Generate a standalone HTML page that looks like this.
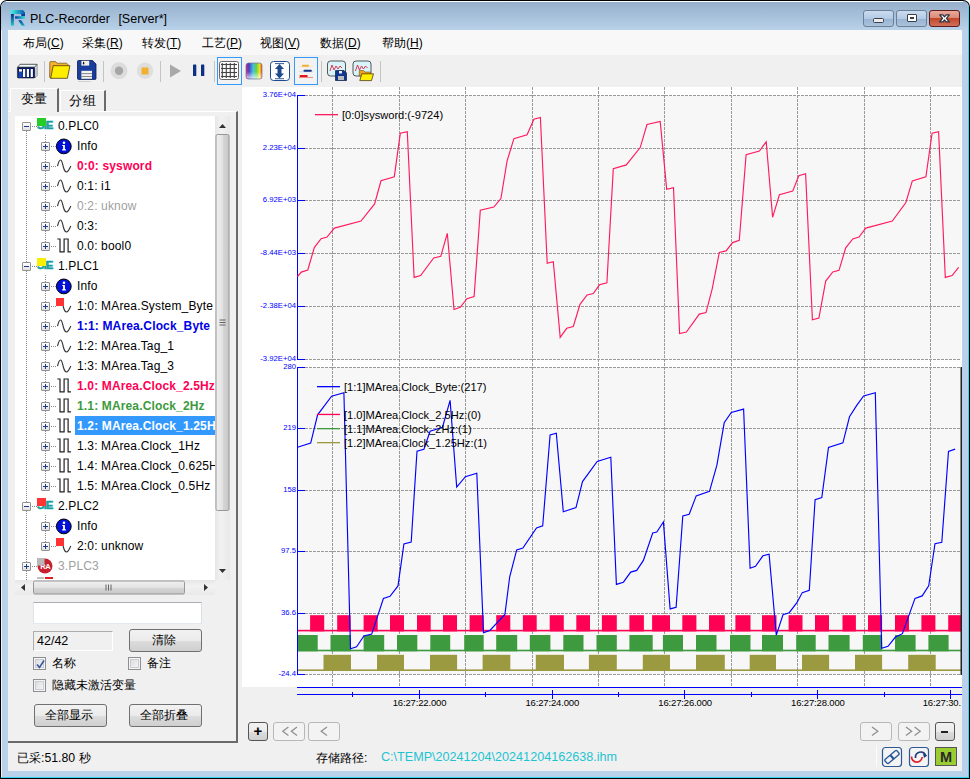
<!DOCTYPE html>
<html><head><meta charset="utf-8">
<style>
*{box-sizing:border-box}
html,body{margin:0;padding:0}
body{width:970px;height:779px;overflow:hidden;position:relative;background:#fff;font-family:"Liberation Sans",sans-serif;font-size:12px;color:#000}
.a{position:absolute}
.frame{left:1px;top:1px;width:968px;height:777px;background:#b9d1ea;border-radius:6px 6px 0 0}
.title{left:1px;top:1px;width:967px;height:29px;background:linear-gradient(#94adca,#b9d2ea);border-radius:6px 6px 0 0}
.client{left:8px;top:30px;width:954px;height:741px;background:#f0f0f0}
.menu{left:8px;top:30px;width:954px;height:25px;background:#f8f8f8}
.mi{top:35px;font-size:12px;white-space:nowrap}
.u{text-decoration:underline}
.sep{width:1px;height:21px;top:61px;background:#c8c8c8;border-right:1px solid #fff}
.wbtn{top:10px;height:17px;width:30px;border:1px solid #6d7f95;border-radius:3px;background:linear-gradient(#c9dbef 0%,#b4cbe5 50%,#98b3d3 51%,#a9c2dd 100%)}
.tree{left:15px;top:116px;width:200px;height:464px;background:#fff;overflow:hidden}
.row{position:absolute;height:20px;line-height:20px;white-space:nowrap;font-size:12px;letter-spacing:0.15px}
.exp{position:absolute;width:9px;height:9px;border:1px solid #919191;background:linear-gradient(#fff,#e0e0e0);border-radius:1px}
.exp:before{content:"";position:absolute;left:1px;top:3px;width:5px;height:1px;background:#1c3a8c}
.exp.p:after{content:"";position:absolute;left:3px;top:1px;width:1px;height:5px;background:#1c3a8c}
.dv{position:absolute;width:1px;border-left:1px dotted #909090}
.dh{position:absolute;height:1px;border-top:1px dotted #909090}
.btn{border:1px solid #707070;border-radius:3px;background:linear-gradient(#f2f2f2 0%,#ebebeb 50%,#dddddd 51%,#cfcfcf 100%);text-align:center;font-size:12px}
.chk{width:13px;height:13px;border:1px solid #8f8f8f;background:linear-gradient(135deg,#d8d8d8,#fafafa);box-shadow:inset 0 0 0 1px #f4f4f4, inset 0 0 0 2px #c8ccd4}
.nb{top:722px;height:19px;border:1px solid #b8b8b8;border-radius:3px;background:#f3f3f3;color:#888;font-size:12px;text-align:center;line-height:16px}
</style></head>
<body>
<div class="a" style="left:0;top:0;width:970px;height:779px;background:#000;border-radius:7px 7px 0 0"></div>
<div class="a frame"></div>
<div class="a" style="left:968px;top:6px;width:1px;height:772px;background:#35d6ef"></div>
<div class="a" style="left:1px;top:777px;width:968px;height:1px;background:#35d6ef"></div>
<div class="a" style="left:1px;top:6px;width:1px;height:771px;background:#e8f0f8"></div>
<div class="a title"></div>
<div class="a" style="left:6px;top:1px;width:957px;height:1px;background:#fbfdff"></div>
<!-- logo -->
<svg class="a" style="left:8px;top:6px" width="22" height="24">
<defs>
<linearGradient id="lgt" x1="0" x2="1"><stop offset="0" stop-color="#40f4e0"/><stop offset="1" stop-color="#0a52b0"/></linearGradient>
<linearGradient id="lgs" x1="0" y1="0" x2="0" y2="1"><stop offset="0" stop-color="#0a2f90"/><stop offset="1" stop-color="#22c8c0"/></linearGradient>
<linearGradient id="lgm" x1="0" x2="1"><stop offset="0" stop-color="#0a40a8"/><stop offset="1" stop-color="#30e4d0"/></linearGradient>
<linearGradient id="lgl" x1="0" y1="0" x2="0" y2="1"><stop offset="0" stop-color="#0a44a8"/><stop offset="1" stop-color="#18b4b8"/></linearGradient>
</defs>
<path d="M2.9 4 H14.9 L17 6.5 V8.5 H13.3 V8 H2.9 Z" fill="url(#lgt)"/>
<rect x="13.3" y="8" width="3.7" height="2.3" fill="#0c3c9c"/>
<rect x="7.1" y="10.2" width="9.9" height="2.6" fill="url(#lgm)"/>
<rect x="2.9" y="8" width="3" height="11.7" fill="url(#lgs)"/>
<path d="M10.2 14.2 H13.3 L17 19.7 H13.8 Z" fill="url(#lgl)"/>
</svg>
<div class="a" style="left:30px;top:11.5px;font-size:12.5px;white-space:nowrap;color:#000">PLC-Recorder<span style="display:inline-block;width:8.5px"></span>[Server*]</div>
<div class="a wbtn" style="left:863px;width:31px"><div class="a" style="left:9px;top:7px;width:11px;height:5px;border:1px solid #3a3f4a;background:#ececec;border-radius:1.5px"></div></div>
<div class="a wbtn" style="left:896px;width:31px"><div class="a" style="left:10px;top:3px;width:10px;height:8px;border:1px solid #3a3f4a;background:#fff;border-radius:1px"><div class="a" style="left:2px;top:2px;width:4px;height:2px;border:1px solid #3a3f4a;background:#8aa4c8"></div></div></div>
<div class="a wbtn" style="left:929px;width:31px;border-color:#5c1d1d;background:linear-gradient(#e9a99a 0%,#dd8b78 45%,#c2472b 50%,#d2705a 100%)">
<svg class="a" style="left:0;top:0" width="29" height="15"><path d="M9.7 3.9 H12.9 L14.5 5.8 L16.1 3.9 H19.3 L16.5 7.4 L19.3 10.9 H16.1 L14.5 9 L12.9 10.9 H9.7 L12.5 7.4 Z" fill="#fff" stroke="#2c3440" stroke-width="1.3" stroke-linejoin="round"/></svg></div>

<div class="a client"></div>
<div class="a menu"></div>
<div class="a mi" style="left:23px">布局(<span class="u">C</span>)</div>
<div class="a mi" style="left:82px">采集(<span class="u">R</span>)</div>
<div class="a mi" style="left:142px">转发(<span class="u">T</span>)</div>
<div class="a mi" style="left:202px">工艺(<span class="u">P</span>)</div>
<div class="a mi" style="left:260px">视图(<span class="u">V</span>)</div>
<div class="a mi" style="left:320px">数据(<span class="u">D</span>)</div>
<div class="a mi" style="left:382px">帮助(<span class="u">H</span>)</div>

<!-- toolbar -->
<svg class="a" style="left:0;top:52px" width="400" height="36">
 <!-- plc rack -->
 <path d="M17.5 15.3 L20 12.3 H37 L34.7 15.3 Z" fill="#eefcff" stroke="#333" stroke-width="0.8" stroke-linejoin="round"/>
 <path d="M34.7 15.3 L37 12.3 V23.5 L34.7 26 Z" fill="#f4fbfc" stroke="#555" stroke-width="0.7"/>
 <rect x="17.4" y="15.3" width="17.3" height="10.7" rx="0.8" fill="#08186a" stroke="#222" stroke-width="0.6"/>
 <rect x="18.5" y="20" width="4" height="5.5" fill="#1444b0"/>
 <rect x="19" y="17.2" width="3" height="2.4" fill="#f8f8f0"/>
 <rect x="23" y="17" width="2.2" height="8" fill="#f8fbf6"/><rect x="26.8" y="17" width="2.2" height="8" fill="#f8fbf6"/><rect x="30.7" y="17" width="2.2" height="8" fill="#f8fbf6"/>
 <rect x="44" y="9" width="1" height="21" fill="#c4c4c4"/>
 <!-- folder -->
 <path d="M49.8 10 Q49.8 9.6 50.5 9.6 H55.7 L56.9 11.2 H66.6 L68.3 12.9 V15 L51 26.2 Q49.6 26 49.6 25 Z" fill="#f8b030" stroke="#6b5010" stroke-width="0.7"/>
 <path d="M53.2 13.7 H69.9 L67.4 26.3 H50.7 Z" fill="#ffee00" stroke="#4a3a10" stroke-width="0.8" stroke-linejoin="round"/>
 <!-- save -->
 <path d="M78.5 8.5 H92.5 L96 12 V26.5 Q96 27.4 95 27.4 H78.5 Q77.5 27.4 77.5 26.5 V9.5 Q77.5 8.5 78.5 8.5 Z" fill="#1a3c9c" stroke="#0a1a50" stroke-width="0.8"/>
 <rect x="81.4" y="8.8" width="7.8" height="4.8" fill="#f4f0e8"/><ellipse cx="83.6" cy="11.2" rx="0.7" ry="1.4" fill="#111"/>
 <rect x="81.4" y="18.8" width="10.6" height="8" fill="#f2f2f2"/>
 <rect x="81.4" y="21.2" width="10.6" height="0.9" fill="#7a7a7a"/><rect x="81.4" y="24.0" width="10.6" height="0.9" fill="#7a7a7a"/>
 <rect x="78" y="29.2" width="12.8" height="0.8" fill="#c8c8c8"/>
 <rect x="103" y="9" width="1" height="21" fill="#c4c4c4"/>
 <!-- record / stop (disabled) -->
 <circle cx="119" cy="18.7" r="8.5" fill="#dcdcdc"/><circle cx="119" cy="18.7" r="4.2" fill="#a6a6a6"/>
 <circle cx="145" cy="18.7" r="8.2" fill="#dedede"/><rect x="141.5" y="15.5" width="7" height="7" fill="#f0b030"/>
 <rect x="160" y="9" width="1" height="21" fill="#c4c4c4"/>
 <path d="M170 12.5 L181 19 L170 25.5 Z" fill="#a9a9a9"/>
 <rect x="193" y="12.5" width="3.3" height="11.5" rx="0.6" fill="#0d3284"/><rect x="201" y="12.5" width="3.3" height="11.5" rx="0.6" fill="#0d3284"/>
 <rect x="214" y="9" width="1" height="21" fill="#c4c4c4"/>
 <!-- grid (selected) -->
 <rect x="217.5" y="5.5" width="24" height="27" fill="#f2f2f2" stroke="#3399ff" stroke-width="1"/>
 <rect x="219.5" y="9.5" width="19" height="18" rx="2" fill="#fff" stroke="#555" stroke-width="0.9"/>
 <g stroke="#444" stroke-width="1.1">
 <line x1="222.3" y1="11" x2="222.3" y2="26"/><line x1="226.3" y1="11" x2="226.3" y2="26"/><line x1="230.3" y1="11" x2="230.3" y2="26"/><line x1="234.3" y1="11" x2="234.3" y2="26"/>
 <line x1="221" y1="12.5" x2="237" y2="12.5"/><line x1="221" y1="16.5" x2="237" y2="16.5"/><line x1="221" y1="20.5" x2="237" y2="20.5"/><line x1="221" y1="24.5" x2="237" y2="24.5"/>
 </g>
 <!-- spectrum -->
 <defs><linearGradient id="sp" x1="0" x2="1"><stop offset="0" stop-color="#c02080"/><stop offset="0.2" stop-color="#4040c0"/><stop offset="0.45" stop-color="#40c0e0"/><stop offset="0.65" stop-color="#60d040"/><stop offset="0.85" stop-color="#f0e020"/><stop offset="1" stop-color="#f04010"/></linearGradient></defs>
 <rect x="246" y="11" width="16" height="16" rx="2.5" fill="url(#sp)" stroke="#7a6aa0" stroke-width="0.7"/>
 <defs><linearGradient id="spw" x1="0" y1="0" x2="0" y2="1"><stop offset="0" stop-color="#fff" stop-opacity="0"/><stop offset="0.55" stop-color="#fff" stop-opacity="0.05"/><stop offset="1" stop-color="#fff" stop-opacity="0.75"/></linearGradient></defs>
 <rect x="246.4" y="11.4" width="15.2" height="15.2" rx="2.3" fill="url(#spw)"/>
 <!-- vertical arrows -->
 <rect x="270.5" y="9.5" width="19" height="19" rx="3" fill="#fff" stroke="#1d4a8c" stroke-width="1"/>
 <path d="M279.5 12 L284 17 H281.5 V21.5 H284 L279.5 26.5 L275 21.5 H277.5 V17 H275 Z" fill="#1d4a8c"/>
 <rect x="275" y="11.2" width="9" height="0.9" fill="#1d4a8c"/><rect x="275" y="26.3" width="9" height="0.9" fill="#1d4a8c"/>
 <!-- bars (selected) -->
 <rect x="294.5" y="5.5" width="23" height="27" fill="#f2f2f2" stroke="#3399ff" stroke-width="1"/>
 <rect x="299" y="14.3" width="14" height="0.9" fill="#f9e6c0"/><rect x="302" y="12.8" width="7" height="2" rx="0.8" fill="#f0b030"/>
 <rect x="299" y="19.3" width="14" height="0.9" fill="#c8d4ea"/><rect x="303.5" y="17.7" width="8.3" height="2.1" rx="0.8" fill="#17388a"/>
 <rect x="299" y="25" width="14" height="0.8" fill="#f07070"/><rect x="299.7" y="23" width="7.9" height="2.1" rx="0.6" fill="#e01818"/>
 <rect x="321" y="9" width="1" height="21" fill="#c4c4c4"/>
 <!-- chart save -->
 <rect x="327.5" y="9" width="18" height="15" rx="3" fill="#d8f4fb" stroke="#444" stroke-width="0.9"/>
 <path d="M330 19 L332 13 L334 18 L336 14 L338 17 L340 14 L342 16" fill="none" stroke="#e02040" stroke-width="0.9"/>
 <path d="M335.5 18.5 H344 L346.5 21 V28.5 H335.5 Z" fill="#0f3590" stroke="#0b1a40" stroke-width="0.7"/>
 <rect x="338" y="24" width="6" height="4" fill="#bbb"/><rect x="339" y="19" width="3" height="2.5" fill="#eee"/>
 <!-- chart open -->
 <rect x="353" y="9" width="18" height="15" rx="3" fill="#d8f4fb" stroke="#444" stroke-width="0.9"/>
 <path d="M355.5 19 L357.5 13 L359.5 18 L361.5 14 L363.5 17 L365.5 14 L367.5 16" fill="none" stroke="#e02040" stroke-width="0.9"/>
 <path d="M359.3 18.5 H363.5 L365 20 H370.5 V24 H359.3 Z" fill="#f0a020" stroke="#6b5010" stroke-width="0.6"/>
 <path d="M359.8 28.6 L361.8 21.8 H373.5 L371.5 28.6 Z" fill="#ffee00" stroke="#4a3a10" stroke-width="0.8" stroke-linejoin="round"/>
 <rect x="380" y="9" width="1" height="21" fill="#c4c4c4"/>
</svg>

<!-- left tab panel -->
<div class="a" style="left:8px;top:111px;width:230px;height:632px;border-top:1px solid #fff;border-right:2px solid #6a6a6a;border-bottom:2px solid #6a6a6a;background:#f0f0f0"></div>
<div class="a" style="left:10px;top:88px;width:49px;height:24px;background:#f0f0f0;border-left:1px solid #fff;border-top:1px solid #fff;border-right:2px solid #6a6a6a;font-size:12.5px;text-align:center;line-height:21px;letter-spacing:0.5px">变量</div>
<div class="a" style="left:60px;top:90px;width:46px;height:21px;background:#f0f0f0;border-left:1px solid #fff;border-top:1px solid #fff;border-right:2px solid #6a6a6a;font-size:12.5px;text-align:center;line-height:21px;letter-spacing:0.5px">分组</div>

<!-- tree -->
<div class="a tree">
<svg class="a" style="left:0;top:0" width="200" height="464"><line x1="11.5" y1="15.0" x2="11.5" y2="464.0" stroke="#8a8a8a" stroke-width="1" stroke-dasharray="1,1"/><line x1="30.5" y1="19.0" x2="30.5" y2="126.0" stroke="#8a8a8a" stroke-width="1" stroke-dasharray="1,1"/><line x1="30.5" y1="159.0" x2="30.5" y2="366.0" stroke="#8a8a8a" stroke-width="1" stroke-dasharray="1,1"/><line x1="30.5" y1="399.0" x2="30.5" y2="426.0" stroke="#8a8a8a" stroke-width="1" stroke-dasharray="1,1"/><line x1="17.0" y1="10.5" x2="22.0" y2="10.5" stroke="#8a8a8a" stroke-width="1" stroke-dasharray="1,1"/><line x1="36.0" y1="30.5" x2="42.0" y2="30.5" stroke="#8a8a8a" stroke-width="1" stroke-dasharray="1,1"/><line x1="36.0" y1="50.5" x2="42.0" y2="50.5" stroke="#8a8a8a" stroke-width="1" stroke-dasharray="1,1"/><line x1="36.0" y1="70.5" x2="42.0" y2="70.5" stroke="#8a8a8a" stroke-width="1" stroke-dasharray="1,1"/><line x1="36.0" y1="90.5" x2="42.0" y2="90.5" stroke="#8a8a8a" stroke-width="1" stroke-dasharray="1,1"/><line x1="36.0" y1="110.5" x2="42.0" y2="110.5" stroke="#8a8a8a" stroke-width="1" stroke-dasharray="1,1"/><line x1="36.0" y1="130.5" x2="42.0" y2="130.5" stroke="#8a8a8a" stroke-width="1" stroke-dasharray="1,1"/><line x1="17.0" y1="150.5" x2="22.0" y2="150.5" stroke="#8a8a8a" stroke-width="1" stroke-dasharray="1,1"/><line x1="36.0" y1="170.5" x2="42.0" y2="170.5" stroke="#8a8a8a" stroke-width="1" stroke-dasharray="1,1"/><line x1="36.0" y1="190.5" x2="42.0" y2="190.5" stroke="#8a8a8a" stroke-width="1" stroke-dasharray="1,1"/><line x1="36.0" y1="210.5" x2="42.0" y2="210.5" stroke="#8a8a8a" stroke-width="1" stroke-dasharray="1,1"/><line x1="36.0" y1="230.5" x2="42.0" y2="230.5" stroke="#8a8a8a" stroke-width="1" stroke-dasharray="1,1"/><line x1="36.0" y1="250.5" x2="42.0" y2="250.5" stroke="#8a8a8a" stroke-width="1" stroke-dasharray="1,1"/><line x1="36.0" y1="270.5" x2="42.0" y2="270.5" stroke="#8a8a8a" stroke-width="1" stroke-dasharray="1,1"/><line x1="36.0" y1="290.5" x2="42.0" y2="290.5" stroke="#8a8a8a" stroke-width="1" stroke-dasharray="1,1"/><line x1="36.0" y1="310.5" x2="42.0" y2="310.5" stroke="#8a8a8a" stroke-width="1" stroke-dasharray="1,1"/><line x1="36.0" y1="330.5" x2="42.0" y2="330.5" stroke="#8a8a8a" stroke-width="1" stroke-dasharray="1,1"/><line x1="36.0" y1="350.5" x2="42.0" y2="350.5" stroke="#8a8a8a" stroke-width="1" stroke-dasharray="1,1"/><line x1="36.0" y1="370.5" x2="42.0" y2="370.5" stroke="#8a8a8a" stroke-width="1" stroke-dasharray="1,1"/><line x1="17.0" y1="390.5" x2="22.0" y2="390.5" stroke="#8a8a8a" stroke-width="1" stroke-dasharray="1,1"/><line x1="36.0" y1="410.5" x2="42.0" y2="410.5" stroke="#8a8a8a" stroke-width="1" stroke-dasharray="1,1"/><line x1="36.0" y1="430.5" x2="42.0" y2="430.5" stroke="#8a8a8a" stroke-width="1" stroke-dasharray="1,1"/><line x1="17.0" y1="450.5" x2="22.0" y2="450.5" stroke="#8a8a8a" stroke-width="1" stroke-dasharray="1,1"/></svg><div class="exp " style="left:7px;top:6px"></div>
<div class="a" style="left:22px;top:4px;font-size:11px;font-weight:bold;color:#1a9e9e;letter-spacing:-0.7px;line-height:11px;-webkit-text-stroke:0.5px #1a9e9e">SIE</div>
<div class="a" style="left:22px;top:2px;width:9px;height:8px;background:#27cd27"></div>
<div class="row" style="left:43px;top:0px;color:#000;">0.PLC0</div>
<div class="exp p" style="left:26px;top:26px"></div>
<svg class="a" style="left:41px;top:22px" width="17" height="17"><circle cx="7.8" cy="8.4" r="7.4" fill="#0010d8" stroke="#000" stroke-width="1"/><circle cx="8" cy="4.8" r="1.3" fill="#fff"/><path d="M6.2 6.9 H8.9 V11.3 H9.9 V12.5 H6.1 V11.3 H7.1 V8.1 H6.2 Z" fill="#fff"/></svg>
<div class="row" style="left:62px;top:20px;color:#000;">Info</div>
<div class="exp p" style="left:26px;top:46px"></div>
<svg class="a" style="left:42px;top:42px" width="16" height="16"><path d="M0.5 8 C1.5 4, 2.5 2, 3.5 2 C5 2, 5.5 6, 6.5 9.5 C7.5 13, 8.5 14, 9.5 14 C11 14, 12.5 11, 13.8 8" fill="none" stroke="#333" stroke-width="1.15"/></svg>
<div class="row" style="left:62px;top:40px;color:#ff0055;font-weight:bold;letter-spacing:0.15px;">0:0: sysword</div>
<div class="exp p" style="left:26px;top:66px"></div>
<svg class="a" style="left:42px;top:62px" width="16" height="16"><path d="M0.5 8 C1.5 4, 2.5 2, 3.5 2 C5 2, 5.5 6, 6.5 9.5 C7.5 13, 8.5 14, 9.5 14 C11 14, 12.5 11, 13.8 8" fill="none" stroke="#333" stroke-width="1.15"/></svg>
<div class="row" style="left:62px;top:60px;color:#000;">0:1: i1</div>
<div class="exp p" style="left:26px;top:86px"></div>
<svg class="a" style="left:42px;top:82px" width="16" height="16"><path d="M0.5 8 C1.5 4, 2.5 2, 3.5 2 C5 2, 5.5 6, 6.5 9.5 C7.5 13, 8.5 14, 9.5 14 C11 14, 12.5 11, 13.8 8" fill="none" stroke="#333" stroke-width="1.15"/></svg>
<div class="row" style="left:62px;top:80px;color:#a0a0a0;">0:2: uknow</div>
<div class="exp p" style="left:26px;top:106px"></div>
<svg class="a" style="left:42px;top:102px" width="16" height="16"><path d="M0.5 8 C1.5 4, 2.5 2, 3.5 2 C5 2, 5.5 6, 6.5 9.5 C7.5 13, 8.5 14, 9.5 14 C11 14, 12.5 11, 13.8 8" fill="none" stroke="#333" stroke-width="1.15"/></svg>
<div class="row" style="left:62px;top:100px;color:#000;">0:3:</div>
<div class="exp p" style="left:26px;top:126px"></div>
<svg class="a" style="left:42px;top:122px" width="16" height="16"><path d="M0.3 1 H3 V13.8 H7.1 V1 H11.1 V13.8 H14" fill="none" stroke="#222" stroke-width="1.2"/></svg>
<div class="row" style="left:62px;top:120px;color:#000;">0.0: bool0</div>
<div class="exp " style="left:7px;top:146px"></div>
<div class="a" style="left:22px;top:144px;font-size:11px;font-weight:bold;color:#1a9e9e;letter-spacing:-0.7px;line-height:11px;-webkit-text-stroke:0.5px #1a9e9e">SIE</div>
<div class="a" style="left:22px;top:142px;width:9px;height:8px;background:#f8f000"></div>
<div class="row" style="left:43px;top:140px;color:#000;">1.PLC1</div>
<div class="exp p" style="left:26px;top:166px"></div>
<svg class="a" style="left:41px;top:162px" width="17" height="17"><circle cx="7.8" cy="8.4" r="7.4" fill="#0010d8" stroke="#000" stroke-width="1"/><circle cx="8" cy="4.8" r="1.3" fill="#fff"/><path d="M6.2 6.9 H8.9 V11.3 H9.9 V12.5 H6.1 V11.3 H7.1 V8.1 H6.2 Z" fill="#fff"/></svg>
<div class="row" style="left:62px;top:160px;color:#000;">Info</div>
<div class="exp p" style="left:26px;top:186px"></div>
<svg class="a" style="left:42px;top:182px" width="16" height="16"><path d="M0.5 8 C1.5 4, 2.5 2, 3.5 2 C5 2, 5.5 6, 6.5 9.5 C7.5 13, 8.5 14, 9.5 14 C11 14, 12.5 11, 13.8 8" fill="none" stroke="#333" stroke-width="1.15"/></svg>
<div class="a" style="left:41px;top:182px;width:8px;height:8px;background:#ff3333"></div>
<div class="row" style="left:62px;top:180px;color:#000;">1:0: MArea.System_Byte</div>
<div class="exp p" style="left:26px;top:206px"></div>
<svg class="a" style="left:42px;top:202px" width="16" height="16"><path d="M0.5 8 C1.5 4, 2.5 2, 3.5 2 C5 2, 5.5 6, 6.5 9.5 C7.5 13, 8.5 14, 9.5 14 C11 14, 12.5 11, 13.8 8" fill="none" stroke="#333" stroke-width="1.15"/></svg>
<div class="row" style="left:62px;top:200px;color:#0000e6;font-weight:bold;letter-spacing:0.15px;">1:1: MArea.Clock_Byte</div>
<div class="exp p" style="left:26px;top:226px"></div>
<svg class="a" style="left:42px;top:222px" width="16" height="16"><path d="M0.5 8 C1.5 4, 2.5 2, 3.5 2 C5 2, 5.5 6, 6.5 9.5 C7.5 13, 8.5 14, 9.5 14 C11 14, 12.5 11, 13.8 8" fill="none" stroke="#333" stroke-width="1.15"/></svg>
<div class="row" style="left:62px;top:220px;color:#000;">1:2: MArea.Tag_1</div>
<div class="exp p" style="left:26px;top:246px"></div>
<svg class="a" style="left:42px;top:242px" width="16" height="16"><path d="M0.5 8 C1.5 4, 2.5 2, 3.5 2 C5 2, 5.5 6, 6.5 9.5 C7.5 13, 8.5 14, 9.5 14 C11 14, 12.5 11, 13.8 8" fill="none" stroke="#333" stroke-width="1.15"/></svg>
<div class="row" style="left:62px;top:240px;color:#000;">1:3: MArea.Tag_3</div>
<div class="exp p" style="left:26px;top:266px"></div>
<svg class="a" style="left:42px;top:262px" width="16" height="16"><path d="M0.3 1 H3 V13.8 H7.1 V1 H11.1 V13.8 H14" fill="none" stroke="#222" stroke-width="1.2"/></svg>
<div class="row" style="left:62px;top:260px;color:#ff0055;font-weight:bold;letter-spacing:0.15px;">1.0: MArea.Clock_2.5Hz</div>
<div class="exp p" style="left:26px;top:286px"></div>
<svg class="a" style="left:42px;top:282px" width="16" height="16"><path d="M0.3 1 H3 V13.8 H7.1 V1 H11.1 V13.8 H14" fill="none" stroke="#222" stroke-width="1.2"/></svg>
<div class="row" style="left:62px;top:280px;color:#3c9a3c;font-weight:bold;letter-spacing:0.15px;">1.1: MArea.Clock_2Hz</div>
<div class="exp p" style="left:26px;top:306px"></div>
<svg class="a" style="left:42px;top:302px" width="16" height="16"><path d="M0.3 1 H3 V13.8 H7.1 V1 H11.1 V13.8 H14" fill="none" stroke="#222" stroke-width="1.2"/></svg>
<div class="a" style="left:60px;top:300px;width:140px;height:19px;background:#3399ff"></div>
<div class="row" style="left:62px;top:300px;color:#fff;font-weight:bold;letter-spacing:0.15px;">1.2: MArea.Clock_1.25Hz</div>
<div class="exp p" style="left:26px;top:326px"></div>
<svg class="a" style="left:42px;top:322px" width="16" height="16"><path d="M0.3 1 H3 V13.8 H7.1 V1 H11.1 V13.8 H14" fill="none" stroke="#222" stroke-width="1.2"/></svg>
<div class="row" style="left:62px;top:320px;color:#000;">1.3: MArea.Clock_1Hz</div>
<div class="exp p" style="left:26px;top:346px"></div>
<svg class="a" style="left:42px;top:342px" width="16" height="16"><path d="M0.3 1 H3 V13.8 H7.1 V1 H11.1 V13.8 H14" fill="none" stroke="#222" stroke-width="1.2"/></svg>
<div class="row" style="left:62px;top:340px;color:#000;">1.4: MArea.Clock_0.625Hz</div>
<div class="exp p" style="left:26px;top:366px"></div>
<svg class="a" style="left:42px;top:362px" width="16" height="16"><path d="M0.3 1 H3 V13.8 H7.1 V1 H11.1 V13.8 H14" fill="none" stroke="#222" stroke-width="1.2"/></svg>
<div class="row" style="left:62px;top:360px;color:#000;">1.5: MArea.Clock_0.5Hz</div>
<div class="exp " style="left:7px;top:386px"></div>
<div class="a" style="left:22px;top:384px;font-size:11px;font-weight:bold;color:#1a9e9e;letter-spacing:-0.7px;line-height:11px;-webkit-text-stroke:0.5px #1a9e9e">SIE</div>
<div class="a" style="left:22px;top:382px;width:9px;height:8px;background:#ff3333"></div>
<div class="row" style="left:43px;top:380px;color:#000;">2.PLC2</div>
<div class="exp p" style="left:26px;top:406px"></div>
<svg class="a" style="left:41px;top:402px" width="17" height="17"><circle cx="7.8" cy="8.4" r="7.4" fill="#0010d8" stroke="#000" stroke-width="1"/><circle cx="8" cy="4.8" r="1.3" fill="#fff"/><path d="M6.2 6.9 H8.9 V11.3 H9.9 V12.5 H6.1 V11.3 H7.1 V8.1 H6.2 Z" fill="#fff"/></svg>
<div class="row" style="left:62px;top:400px;color:#000;">Info</div>
<div class="exp p" style="left:26px;top:426px"></div>
<svg class="a" style="left:42px;top:422px" width="16" height="16"><path d="M0.5 8 C1.5 4, 2.5 2, 3.5 2 C5 2, 5.5 6, 6.5 9.5 C7.5 13, 8.5 14, 9.5 14 C11 14, 12.5 11, 13.8 8" fill="none" stroke="#333" stroke-width="1.15"/></svg>
<div class="a" style="left:41px;top:422px;width:8px;height:8px;background:#ff3333"></div>
<div class="row" style="left:62px;top:420px;color:#000;">2:0: unknow</div>
<div class="exp p" style="left:7px;top:446px"></div>
<svg class="a" style="left:22px;top:441px" width="18" height="18"><circle cx="8" cy="9" r="7.5" fill="#c8202e"/><text x="8.3" y="12" text-anchor="middle" font-family="Liberation Sans, sans-serif" font-size="7.5" font-weight="bold" fill="#fff" letter-spacing="-0.3">RA</text><rect x="0" y="1" width="7.5" height="7.5" fill="#b8b8b8"/></svg>
<div class="row" style="left:43px;top:440px;color:#a0a0a0;">3.PLC3</div>
<div class="a" style="left:22px;top:461px;width:7px;height:2px;background:#c0c0c0"></div>
<div class="a" style="left:30px;top:461px;width:8px;height:2px;background:#e02020"></div>
</div>
<!-- vertical scrollbar -->
<div class="a" style="left:215px;top:116px;width:15px;height:464px;background:linear-gradient(90deg,#e6e6e6,#f2f2f2 40%,#e9e9e9)"></div>
<svg class="a" style="left:215px;top:116px" width="15" height="464">
 <path d="M4 12 L7.5 8 L11 12 Z" fill="#333"/>
 <rect x="1" y="18.5" width="13" height="376" rx="1.5" fill="url(#tg)" stroke="#8e8f8f" stroke-width="0.9"/>
 <defs><linearGradient id="tg" x1="0" x2="1"><stop offset="0" stop-color="#f0f0f0"/><stop offset="0.5" stop-color="#e3e3e3"/><stop offset="0.51" stop-color="#d6d6d6"/><stop offset="1" stop-color="#c8c8c8"/></linearGradient></defs>
 <g stroke="#555" stroke-width="0.9"><line x1="4.5" y1="204" x2="10.5" y2="204"/><line x1="4.5" y1="206.5" x2="10.5" y2="206.5"/><line x1="4.5" y1="209" x2="10.5" y2="209"/></g>
 <path d="M4 453 L7.5 457 L11 453 Z" fill="#333"/>
</svg>
<!-- horizontal scrollbar -->
<div class="a" style="left:15px;top:580px;width:200px;height:15px;background:linear-gradient(#e6e6e6,#f2f2f2 40%,#e9e9e9)"></div>
<div class="a" style="left:215px;top:580px;width:15px;height:15px;background:#f0f0f0"></div>
<svg class="a" style="left:15px;top:580px" width="200" height="15">
 <defs><linearGradient id="hg" x1="0" y1="0" x2="0" y2="1"><stop offset="0" stop-color="#f0f0f0"/><stop offset="0.5" stop-color="#e3e3e3"/><stop offset="0.51" stop-color="#d6d6d6"/><stop offset="1" stop-color="#c8c8c8"/></linearGradient></defs>
 <path d="M10 7.5 L6 4 L6 11 Z" transform="translate(16,0) scale(-1,1) translate(0,0)" fill="#333"/>
 <rect x="18.5" y="1" width="151" height="13" rx="1.5" fill="url(#hg)" stroke="#8e8f8f" stroke-width="0.9"/>
 <g stroke="#555" stroke-width="0.9"><line x1="91" y1="4.5" x2="91" y2="10.5"/><line x1="93.5" y1="4.5" x2="93.5" y2="10.5"/><line x1="96" y1="4.5" x2="96" y2="10.5"/></g>
 <path d="M189 4 L193 7.5 L189 11 Z" fill="#333"/>
</svg>

<!-- search + controls -->
<div class="a" style="left:33px;top:602px;width:169px;height:22px;background:#fff;border:1px solid #abadb3;border-top-color:#abadb3;border-bottom-color:#e3e9ef;border-left-color:#e2e3ea;border-right-color:#dbdfe6"></div>
<div class="a" style="left:33px;top:631px;width:80px;height:20px;background:#f0f0f0;border:1px solid #adadad;border-right-color:#fff;border-bottom-color:#fff;font-size:12.5px;line-height:18px;padding-left:3px">42/42</div>
<div class="a btn" style="left:129px;top:629px;width:73px;height:23px;line-height:21px;padding-right:3px">清除</div>
<div class="a chk" style="left:33px;top:657px"><svg class="a" style="left:1px;top:1px" width="11" height="11"><path d="M2 5.5 L4.5 8.5 L9 1.5" fill="none" stroke="#3b57a0" stroke-width="1.6"/></svg></div>
<div class="a" style="left:52px;top:655px;font-size:12px">名称</div>
<div class="a chk" style="left:128px;top:657px"></div>
<div class="a" style="left:147px;top:655px;font-size:12px">备注</div>
<div class="a chk" style="left:33px;top:679px"></div>
<div class="a" style="left:52px;top:677px;font-size:12px">隐藏未激活变量</div>
<div class="a btn" style="left:34px;top:704px;width:73px;height:23px;line-height:21px;padding-right:3px">全部显示</div>
<div class="a btn" style="left:129px;top:704px;width:73px;height:23px;line-height:21px;padding-right:3px">全部折叠</div>

<svg width="970" height="779" style="position:absolute;left:0;top:0">
<rect x="242" y="87" width="720" height="600" fill="#ffffff"/>
<rect x="298" y="96" width="663" height="263" fill="#f7f7f7"/>
<rect x="298" y="368" width="663" height="306" fill="#f7f7f7"/>
<g stroke="#9a9a9a" stroke-width="1" stroke-dasharray="3,1" fill="none"><line x1="332.5" y1="87" x2="332.5" y2="687" /><line x1="399.5" y1="87" x2="399.5" y2="687" /><line x1="465.5" y1="87" x2="465.5" y2="687" /><line x1="532.5" y1="87" x2="532.5" y2="687" /><line x1="598.5" y1="87" x2="598.5" y2="687" /><line x1="664.5" y1="87" x2="664.5" y2="687" /><line x1="731.5" y1="87" x2="731.5" y2="687" /><line x1="797.5" y1="87" x2="797.5" y2="687" /><line x1="864.5" y1="87" x2="864.5" y2="687" /><line x1="930.5" y1="87" x2="930.5" y2="687" /><line x1="305" y1="95.5" x2="961" y2="95.5" /><line x1="305" y1="148.5" x2="961" y2="148.5" /><line x1="305" y1="200.5" x2="961" y2="200.5" /><line x1="305" y1="253.5" x2="961" y2="253.5" /><line x1="305" y1="306.5" x2="961" y2="306.5" /><line x1="305" y1="359.5" x2="961" y2="359.5" /><line x1="305" y1="367.5" x2="961" y2="367.5" /><line x1="305" y1="428.5" x2="961" y2="428.5" /><line x1="305" y1="490.5" x2="961" y2="490.5" /><line x1="305" y1="551.5" x2="961" y2="551.5" /><line x1="305" y1="613.5" x2="961" y2="613.5" /><line x1="305" y1="674.5" x2="961" y2="674.5" /></g>
<rect x="297" y="95" width="1" height="265" fill="#0000ff"/><rect x="297" y="367" width="1" height="308" fill="#0000ff"/><rect x="297" y="95" width="8" height="1" fill="#0000ff"/><rect x="297" y="148" width="8" height="1" fill="#0000ff"/><rect x="297" y="200" width="8" height="1" fill="#0000ff"/><rect x="297" y="253" width="8" height="1" fill="#0000ff"/><rect x="297" y="306" width="8" height="1" fill="#0000ff"/><rect x="297" y="359" width="8" height="1" fill="#0000ff"/><rect x="297" y="367" width="8" height="1" fill="#0000ff"/><rect x="297" y="428" width="8" height="1" fill="#0000ff"/><rect x="297" y="490" width="8" height="1" fill="#0000ff"/><rect x="297" y="551" width="8" height="1" fill="#0000ff"/><rect x="297" y="613" width="8" height="1" fill="#0000ff"/><rect x="297" y="674" width="8" height="1" fill="#0000ff"/>
<g font-family='"Liberation Sans", sans-serif' font-size="7.7" fill="#0000ff" text-anchor="end"><text x="296" y="97.2">3.76E+04</text><text x="296" y="150.2">2.23E+04</text><text x="296" y="202.2">6.92E+03</text><text x="296" y="255.2">-8.44E+03</text><text x="296" y="308.2">-2.38E+04</text><text x="296" y="361.2">-3.92E+04</text><text x="296" y="369.2">280</text><text x="296" y="430.2">219</text><text x="296" y="492.2">158</text><text x="296" y="553.2">97.5</text><text x="296" y="615.2">36.6</text><text x="296" y="676.2">-24.4</text></g>
<rect x="310.1" y="615.2" width="14.1" height="16.2" fill="#ff0055"/><rect x="337.2" y="615.2" width="13.4" height="16.2" fill="#ff0055"/><rect x="363.6" y="615.2" width="14.1" height="16.2" fill="#ff0055"/><rect x="390.0" y="615.2" width="14.0" height="16.2" fill="#ff0055"/><rect x="417.0" y="615.2" width="13.7" height="16.2" fill="#ff0055"/><rect x="443.0" y="615.2" width="14.0" height="16.2" fill="#ff0055"/><rect x="469.6" y="615.2" width="14.1" height="16.2" fill="#ff0055"/><rect x="496.2" y="615.2" width="14.1" height="16.2" fill="#ff0055"/><rect x="522.9" y="615.2" width="13.8" height="16.2" fill="#ff0055"/><rect x="549.7" y="615.2" width="14.1" height="16.2" fill="#ff0055"/><rect x="576.3" y="615.2" width="13.7" height="16.2" fill="#ff0055"/><rect x="601.9" y="615.2" width="14.9" height="16.2" fill="#ff0055"/><rect x="629.4" y="615.2" width="14.5" height="16.2" fill="#ff0055"/><rect x="652.1" y="615.2" width="17.9" height="16.2" fill="#ff0055"/><rect x="682.3" y="615.2" width="14.1" height="16.2" fill="#ff0055"/><rect x="709.0" y="615.2" width="15.8" height="16.2" fill="#ff0055"/><rect x="735.4" y="615.2" width="15.1" height="16.2" fill="#ff0055"/><rect x="762.0" y="615.2" width="14.5" height="16.2" fill="#ff0055"/><rect x="788.6" y="615.2" width="13.9" height="16.2" fill="#ff0055"/><rect x="815.0" y="615.2" width="14.0" height="16.2" fill="#ff0055"/><rect x="842.5" y="615.2" width="13.4" height="16.2" fill="#ff0055"/><rect x="868.0" y="615.2" width="14.1" height="16.2" fill="#ff0055"/><rect x="895.0" y="615.2" width="14.0" height="16.2" fill="#ff0055"/><rect x="921.4" y="615.2" width="14.0" height="16.2" fill="#ff0055"/><rect x="948.2" y="615.2" width="12.8" height="16.2" fill="#ff0055"/><rect x="298" y="629.8" width="663" height="1.6" fill="#ff0055"/>
<rect x="298.0" y="635.0" width="19.7" height="16.3" fill="#3e9a3e"/><rect x="330.5" y="635.0" width="20.5" height="16.3" fill="#3e9a3e"/><rect x="363.6" y="635.0" width="20.6" height="16.3" fill="#3e9a3e"/><rect x="397.0" y="635.0" width="20.3" height="16.3" fill="#3e9a3e"/><rect x="430.3" y="635.0" width="19.9" height="16.3" fill="#3e9a3e"/><rect x="464.2" y="635.0" width="19.5" height="16.3" fill="#3e9a3e"/><rect x="496.2" y="635.0" width="21.0" height="16.3" fill="#3e9a3e"/><rect x="529.8" y="635.0" width="20.6" height="16.3" fill="#3e9a3e"/><rect x="563.3" y="635.0" width="20.2" height="16.3" fill="#3e9a3e"/><rect x="596.5" y="635.0" width="20.3" height="16.3" fill="#3e9a3e"/><rect x="629.4" y="635.0" width="23.3" height="16.3" fill="#3e9a3e"/><rect x="662.9" y="635.0" width="20.1" height="16.3" fill="#3e9a3e"/><rect x="696.0" y="635.0" width="20.5" height="16.3" fill="#3e9a3e"/><rect x="730.0" y="635.0" width="20.5" height="16.3" fill="#3e9a3e"/><rect x="762.0" y="635.0" width="21.0" height="16.3" fill="#3e9a3e"/><rect x="796.2" y="635.0" width="19.5" height="16.3" fill="#3e9a3e"/><rect x="828.5" y="635.0" width="21.1" height="16.3" fill="#3e9a3e"/><rect x="862.8" y="635.0" width="19.3" height="16.3" fill="#3e9a3e"/><rect x="895.0" y="635.0" width="20.6" height="16.3" fill="#3e9a3e"/><rect x="928.4" y="635.0" width="20.2" height="16.3" fill="#3e9a3e"/><rect x="298" y="649.7" width="663" height="1.6" fill="#3e9a3e"/>
<rect x="323.5" y="654.8" width="27.5" height="16.2" fill="#9c9a40"/><rect x="377.0" y="654.8" width="27.0" height="16.2" fill="#9c9a40"/><rect x="430.0" y="654.8" width="27.1" height="16.2" fill="#9c9a40"/><rect x="482.6" y="654.8" width="27.7" height="16.2" fill="#9c9a40"/><rect x="535.8" y="654.8" width="28.2" height="16.2" fill="#9c9a40"/><rect x="588.9" y="654.8" width="27.9" height="16.2" fill="#9c9a40"/><rect x="642.8" y="654.8" width="27.2" height="16.2" fill="#9c9a40"/><rect x="696.0" y="654.8" width="28.8" height="16.2" fill="#9c9a40"/><rect x="749.7" y="654.8" width="26.3" height="16.2" fill="#9c9a40"/><rect x="802.0" y="654.8" width="27.1" height="16.2" fill="#9c9a40"/><rect x="855.0" y="654.8" width="27.1" height="16.2" fill="#9c9a40"/><rect x="908.2" y="654.8" width="27.5" height="16.2" fill="#9c9a40"/><rect x="298" y="669.4" width="663" height="1.6" fill="#9c9a40"/>
<rect x="960.5" y="367" width="1.5" height="308" fill="#222"/>
<polyline points="297.5,276.5 301.3,272.1 307.8,270.0 314.3,247.6 321.1,238.7 327.0,237.0 334.4,228.1 361.0,221.0 374.6,203.9 381.0,180.8 394.3,176.7 400.3,133.3 407.3,131.8 414.1,277.4 420.6,275.6 433.7,258.0 440.8,256.2 447.3,233.3 454.0,309.5 460.2,307.3 467.0,298.7 474.1,296.6 480.3,210.2 493.8,207.1 500.9,198.5 507.1,160.9 513.9,138.7 527.1,134.7 533.9,119.3 540.4,117.4 547.2,263.3 553.3,261.7 560.2,337.3 566.7,328.3 573.3,326.5 580.0,304.3 587.1,295.0 593.3,293.5 599.5,284.8 606.9,282.7 613.3,168.6 626.3,164.9 640.2,147.6 647.0,124.5 660.2,121.4 666.7,189.2 673.5,187.7 679.6,333.6 686.4,332.0 699.3,314.1 706.0,312.6 712.2,288.8 719.3,252.5 726.1,250.9 732.6,242.6 739.3,240.4 746.1,154.7 759.4,151.0 766.2,141.8 772.6,217.3 779.4,194.8 792.7,191.1 798.8,175.7 805.6,173.8 812.4,319.7 818.9,318.1 825.7,281.1 832.8,271.9 839.0,270.3 845.7,247.8 852.8,238.9 859.0,237.0 865.8,228.1 892.3,221.0 905.9,202.5 912.3,180.9 925.9,176.9 932.1,133.1 938.6,131.6 945.3,277.4 952.1,275.6 958.6,267.3" fill="none" stroke="#ff1a5e" stroke-width="1.15" stroke-linejoin="miter"/>
<polyline points="297.5,447.3 310.7,443.1 317.6,414.8 331.6,396.2 343.9,392.8 350.5,648.8 356.6,646.8 363.9,635.9 371.7,634.1 383.4,598.5 390.0,596.3 398.0,585.9 403.9,543.9 411.2,542.0 417.0,451.2 423.9,449.2 430.1,431.2 442.5,427.2 450.1,400.4 456.7,487.1 465.4,476.7 476.8,473.3 483.5,632.6 489.9,630.5 504.9,614.4 509.7,576.8 516.7,549.9 522.9,548.0 536.5,527.9 542.7,525.9 550.1,435.0 556.3,433.3 563.3,511.8 576.0,507.6 582.5,481.6 597.2,461.5 610.8,457.3 616.4,584.4 623.4,582.2 630.7,572.1 636.7,570.4 643.4,560.4 652.7,533.0 656.8,532.0 663.4,522.0 670.1,608.9 676.1,607.2 682.8,516.0 689.2,514.3 696.2,495.9 709.5,491.3 716.9,465.2 724.2,422.8 731.3,412.4 743.6,409.1 750.1,568.3 755.5,566.3 762.9,555.8 769.1,554.2 776.3,635.1 783.0,614.7 789.2,612.7 796.9,602.6 802.3,592.6 809.3,590.3 815.1,499.6 821.8,497.6 828.5,447.5 842.9,442.8 849.5,416.8 856.9,405.1 863.6,396.0 875.3,392.7 881.7,648.2 888.0,646.3 895.2,637.3 902.4,633.7 915.0,598.4 922.2,595.9 928.7,585.8 935.0,543.7 941.8,542.3 948.5,451.5 955.1,449.1" fill="none" stroke="#0000ff" stroke-width="1.15" stroke-linejoin="miter"/>
<rect x="315" y="114" width="23" height="1.3" fill="#ff1a5e"/><rect x="317" y="386" width="23" height="1.3" fill="#0000ff"/><rect x="317" y="413.8" width="23" height="1.3" fill="#ff0055"/><rect x="317" y="428" width="23" height="1.3" fill="#3e9a3e"/><rect x="317" y="442" width="23" height="1.3" fill="#9c9a40"/><g font-family='"Liberation Sans", sans-serif' font-size="11.1" fill="#000"><text x="342" y="118.6">[0:0]sysword:(-9724)</text><text x="344" y="390.6">[1:1]MArea.Clock_Byte:(217)</text><text x="344" y="418.6">[1.0]MArea.Clock_2.5Hz:(0)</text><text x="344" y="432.6">[1.1]MArea.Clock_2Hz:(1)</text><text x="344" y="446.6">[1.2]MArea.Clock_1.25Hz:(1)</text></g>
<rect x="297" y="687" width="665" height="1" fill="#0000ff"/><rect x="297" y="694" width="665" height="1" fill="#0000ff"/><rect x="352" y="692" width="1" height="5" fill="#0000ff"/><rect x="419" y="690" width="1" height="9" fill="#0000ff"/><rect x="485" y="692" width="1" height="5" fill="#0000ff"/><rect x="552" y="690" width="1" height="9" fill="#0000ff"/><rect x="618" y="692" width="1" height="5" fill="#0000ff"/><rect x="684" y="690" width="1" height="9" fill="#0000ff"/><rect x="751" y="692" width="1" height="5" fill="#0000ff"/><rect x="817" y="690" width="1" height="9" fill="#0000ff"/><rect x="884" y="692" width="1" height="5" fill="#0000ff"/><rect x="950" y="690" width="1" height="9" fill="#0000ff"/><g font-family='"Liberation Sans", sans-serif' font-size="9.5" fill="#000" text-anchor="middle" letter-spacing="-0.15"><text x="419.5" y="706">16:27:22.000</text><text x="552.3" y="706">16:27:24.000</text><text x="685.1" y="706">16:27:26.000</text><text x="817.9" y="706">16:27:28.000</text><text x="961" y="706" text-anchor="end">16:27:30.</text></g>
</svg>

<!-- nav buttons -->
<div class="a btn" style="left:248px;top:722px;width:20px;height:19px;border-color:#555;line-height:16px;font-size:15px;font-weight:bold">+</div>
<div class="a nb" style="left:273px;width:32px"><svg class="a" style="left:0;top:0" width="30" height="17"><path d="M14.4 4 L8.8 8.3 L14.4 12.5 M23 4 L17.4 8.3 L23 12.5" fill="none" stroke="#909090" stroke-width="1.3"/></svg></div>
<div class="a nb" style="left:308px;width:32px"><svg class="a" style="left:0;top:0" width="30" height="17"><path d="M18 4 L12.2 8.3 L18 12.5" fill="none" stroke="#909090" stroke-width="1.3"/></svg></div>
<div class="a nb" style="left:860px;width:32px"><svg class="a" style="left:0;top:0" width="30" height="17"><path d="M11 4 L16.8 8.3 L11 12.5" fill="none" stroke="#909090" stroke-width="1.3"/></svg></div>
<div class="a nb" style="left:898px;width:32px"><svg class="a" style="left:0;top:0" width="30" height="17"><path d="M7 4 L12.6 8.3 L7 12.5 M15.6 4 L21.2 8.3 L15.6 12.5" fill="none" stroke="#909090" stroke-width="1.3"/></svg></div>
<div class="a btn" style="left:935px;top:722px;width:20px;height:19px;border-color:#555"><div class="a" style="left:5px;top:8px;width:7px;height:1.6px;background:#222"></div></div>

<!-- status -->
<div class="a" style="left:17px;top:750px;font-size:12.3px;white-space:nowrap">已采:51.80 秒</div>
<div class="a" style="left:316px;top:750px;font-size:12.3px;white-space:nowrap">存储路径:</div>
<div class="a" style="left:381px;top:750px;font-size:12.6px;white-space:nowrap;color:#1ec3d2">C:\TEMP\20241204\20241204162638.ihm</div>
<div class="a" style="left:876px;top:745px;width:1px;height:22px;background:#fcfcfc"></div>
<svg class="a" style="left:880px;top:745px" width="80" height="24">
 <rect x="2.5" y="2.5" width="19" height="19" rx="3" fill="#f4f4f4" stroke="#2b5797" stroke-width="1.2"/>
 <g transform="translate(12,12) rotate(-40)" fill="none" stroke="#2b5797" stroke-width="1.4">
  <rect x="-7.8" y="-2.6" width="8.2" height="5.2" rx="1.2"/><rect x="-0.4" y="-2.6" width="8.2" height="5.2" rx="1.2"/>
 </g>
 <rect x="29.5" y="2.5" width="19" height="19" rx="3" fill="#f4f4f4" stroke="#2b5797" stroke-width="1.2"/>
 <path d="M31.5 11.5 A5.3 5.3 0 0 0 42.2 12" fill="none" stroke="#e0202a" stroke-width="1.7"/>
 <path d="M35.5 13 A5.3 5.3 0 0 1 45.5 10" fill="none" stroke="#1c3d80" stroke-width="1.7"/>
 <path d="M43 8.5 L47.3 10.5 L44 13 Z" fill="#1c3d80"/>
 <rect x="55.5" y="2.5" width="21" height="18" fill="#9acd32" stroke="#555" stroke-width="1"/>
 <text x="66" y="17" text-anchor="middle" font-family="Liberation Sans, sans-serif" font-weight="bold" font-size="14.5" fill="#2a2a2a">M</text>
</svg>
</body></html>
